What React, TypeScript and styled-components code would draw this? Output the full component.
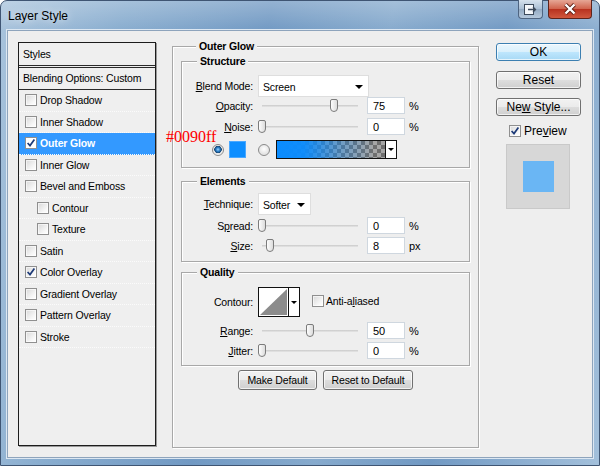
import React from "react";
import styled, { createGlobalStyle } from "styled-components";

const GlobalStyle = createGlobalStyle`
  html, body {
    margin: 0;
    padding: 0;
  }
  body {
    width: 600px;
    height: 466px;
    overflow: hidden;
    font-family: "Liberation Sans", Arial, sans-serif;
    font-size: 10.5px;
    letter-spacing: -0.15px;
    color: #000;
  }
`;

const CLIENT_BG = "#eeeeee";

interface StyleItem {
  label: string;
  checked?: boolean;
  active?: boolean;
  indent?: boolean;
}

const styleItems: StyleItem[] = [
  { label: "Drop Shadow" },
  { label: "Inner Shadow" },
  { label: "Outer Glow", checked: true, active: true },
  { label: "Inner Glow" },
  { label: "Bevel and Emboss" },
  { label: "Contour", indent: true },
  { label: "Texture", indent: true },
  { label: "Satin" },
  { label: "Color Overlay", checked: true },
  { label: "Gradient Overlay" },
  { label: "Pattern Overlay" },
  { label: "Stroke" },
];

const CheckMark = () => (
  <svg width="10" height="10" viewBox="0 0 10 10">
    <path d="M1.6 5 L4 7.6 L8.4 1.6" fill="none" stroke="#1d3a78" strokeWidth="1.7" />
  </svg>
);

const Slider: React.FC<{ pos: number }> = ({ pos }) => (
  <SliderTrack>
    <Thumb style={{ left: pos * 96 }} />
  </SliderTrack>
);

const NumberField: React.FC<{ value: string; unit: string }> = ({ value, unit }) => (
  <>
    <NumInput value={value} readOnly />
    <Unit>{unit}</Unit>
  </>
);

const App: React.FC = () => {
  return (
    <>
      <GlobalStyle />
      <Window>
        <TitleBar>
          <TitleText>Layer Style</TitleText>
          <CaptionButtons>
            <HelpButton>
              <svg width="13" height="11" viewBox="0 0 13 11">
                <rect x="0.5" y="0.5" width="9" height="10" fill="#f4f7fb" stroke="#3c4a5c" />
                <path d="M4 5.5 H11.5 M9 3 L11.5 5.5 L9 8" fill="none" stroke="#3c4a5c" strokeWidth="1.3" />
              </svg>
            </HelpButton>
            <CloseButton>
              <svg width="14" height="12" viewBox="0 0 14 12">
                <path d="M2.5 1.5 L11.5 10.5 M11.5 1.5 L2.5 10.5" stroke="#5a1d14" strokeWidth="4" />
                <path d="M2.5 1.5 L11.5 10.5 M11.5 1.5 L2.5 10.5" stroke="#fff" strokeWidth="2.4" />
              </svg>
            </CloseButton>
          </CaptionButtons>
        </TitleBar>

        <Client>
          <StyleList>
            <ListHeader>Styles</ListHeader>
            <BlendRow>Blending Options: Custom</BlendRow>
            {styleItems.map((item) => (
              <ListItem key={item.label} $indent={item.indent} $active={item.active}>
                <CheckBox $light={item.active}>{item.checked && <CheckMark />}</CheckBox>
                <span>{item.label}</span>
              </ListItem>
            ))}
          </StyleList>

          <MainColumn>
            <MainGroup>
              <GroupTitle>Outer Glow</GroupTitle>

              <GroupBox $mt={8} $pb={9}>
                <GroupTitle>Structure</GroupTitle>
                <FormRow $mt={7} $h={22}>
                  <Label>
                    <u>B</u>lend Mode:
                  </Label>
                  <Select $w={111}>
                    <span>Screen</span>
                    <Arrow />
                  </Select>
                </FormRow>
                <FormRow $mt={0}>
                  <Label>
                    <u>O</u>pacity:
                  </Label>
                  <Slider pos={0.75} />
                  <NumberField value="75" unit="%" />
                </FormRow>
                <FormRow $mt={4}>
                  <Label>
                    <u>N</u>oise:
                  </Label>
                  <Slider pos={0} />
                  <NumberField value="0" unit="%" />
                </FormRow>
                <ColorRow>
                  <Radio $on />
                  <Swatch />
                  <Radio />
                  <GradientPicker>
                    <GradientFill />
                    <PickerArrow>
                      <Arrow $small />
                    </PickerArrow>
                  </GradientPicker>
                </ColorRow>
              </GroupBox>

              <GroupBox $mt={13} $pb={7}>
                <GroupTitle>Elements</GroupTitle>
                <FormRow $mt={5} $h={22}>
                  <Label>
                    <u>T</u>echnique:
                  </Label>
                  <Select $w={53}>
                    <span>Softer</span>
                    <Arrow />
                  </Select>
                </FormRow>
                <FormRow $mt={2}>
                  <Label>
                    S<u>p</u>read:
                  </Label>
                  <Slider pos={0} />
                  <NumberField value="0" unit="%" />
                </FormRow>
                <FormRow $mt={3}>
                  <Label>
                    <u>S</u>ize:
                  </Label>
                  <Slider pos={0.083} />
                  <NumberField value="8" unit="px" />
                </FormRow>
              </GroupBox>

              <GroupBox $mt={10} $pb={6}>
                <GroupTitle>Quality</GroupTitle>
                <FormRow $mt={8} $h={30}>
                  <Label>Contour:</Label>
                  <ContourPicker>
                    <svg width="29" height="28" viewBox="0 0 29 28">
                      <rect width="29" height="28" fill="#fff" />
                      <polygon points="1,27 28,1 28,27" fill="#8c8c8c" />
                    </svg>
                    <PickerArrow>
                      <Arrow $small />
                    </PickerArrow>
                  </ContourPicker>
                  <AntiAlias>
                    <CheckBox />
                    <span>
                      Anti-a<u>l</u>iased
                    </span>
                  </AntiAlias>
                </FormRow>
                <FormRow $mt={5}>
                  <Label>
                    <u>R</u>ange:
                  </Label>
                  <Slider pos={0.5} />
                  <NumberField value="50" unit="%" />
                </FormRow>
                <FormRow $mt={3}>
                  <Label>
                    <u>J</u>itter:
                  </Label>
                  <Slider pos={0} />
                  <NumberField value="0" unit="%" />
                </FormRow>
              </GroupBox>

              <DefaultButtons>
                <Button $w={79}>Make Default</Button>
                <Button $w={90}>Reset to Default</Button>
              </DefaultButtons>
            </MainGroup>
          </MainColumn>

          <SideColumn>
            <Button $w={85} $h={18} $primary $big>
              OK
            </Button>
            <Button $w={85} $h={18} $mt={10} $big>
              Reset
            </Button>
            <Button $w={85} $h={18} $mt={9} $big>
              <span>
                Ne<u>w</u> Style...
              </span>
            </Button>
            <PreviewToggle>
              <CheckBox>
                <CheckMark />
              </CheckBox>
              <span>
                Pre<u>v</u>iew
              </span>
            </PreviewToggle>
            <PreviewBox>
              <PreviewSwatch />
            </PreviewBox>
          </SideColumn>
        </Client>

        <Annotation>#0090ff</Annotation>
      </Window>
    </>
  );
};

const Window = styled.div`
  position: relative;
  box-sizing: border-box;
  width: 600px;
  height: 466px;
  display: flex;
  flex-direction: column;
  border: 1px solid #3f5573;
  border-radius: 7px 7px 0 0;
  background:
    linear-gradient(180deg, rgba(255, 255, 255, 0.25), rgba(255, 255, 255, 0) 30px),
    linear-gradient(100deg, #a8c3dc 0%, #89adcf 18%, #7199c3 40%, #86aacd 58%, #7199c3 75%, #a3c0db 100%);
`;

const TitleBar = styled.div`
  height: 29px;
  display: flex;
  align-items: flex-start;
  padding-left: 7px;
`;

const TitleText = styled.span`
  align-self: center;
  font-family: "Liberation Sans", Arial, sans-serif;
  font-size: 12px;
  letter-spacing: 0;
  color: #000;
  text-shadow: 0 0 8px rgba(255, 255, 255, 0.9);
`;

const CaptionButtons = styled.div`
  margin-left: auto;
  margin-right: 7px;
  margin-top: -1px;
  display: flex;
  gap: 5px;
`;

const HelpButton = styled.div`
  box-sizing: border-box;
  width: 25px;
  height: 19px;
  display: flex;
  align-items: center;
  justify-content: center;
  border: 1px solid #4e6480;
  border-top: none;
  border-radius: 0 0 4px 4px;
  background: linear-gradient(180deg, #d6e2ee, #a9bed4 50%, #93aac3 51%, #b5c8dc);
`;

const CloseButton = styled.div`
  box-sizing: border-box;
  width: 44px;
  height: 19px;
  display: flex;
  align-items: center;
  justify-content: center;
  border: 1px solid #5e231b;
  border-top: none;
  border-radius: 0 0 4px 4px;
  background: linear-gradient(180deg, #e6a796, #d0644e 48%, #b8321f 52%, #d0583e);
`;

const Client = styled.div`
  flex: 1;
  box-sizing: border-box;
  margin: 0 6px 7px 6px;
  border: 1px solid #8ea4bc;
  box-shadow: 0 0 0 1px #dce7f2;
  background: ${CLIENT_BG};
  display: flex;
  align-items: flex-start;
  padding: 11px 0 0 10px;
`;

const StyleList = styled.div`
  box-sizing: border-box;
  flex-shrink: 0;
  width: 138px;
  height: 404px;
  border: 1px solid #1c1c1c;
  box-shadow: 1px 1px 0 #9a9a9a;
  background: #efefef;
`;

const ListHeader = styled.div`
  height: 22px;
  line-height: 22px;
  padding-left: 4px;
  border-bottom: 3px double #2a2a2a;
`;

const BlendRow = styled.div`
  height: 21px;
  line-height: 21px;
  padding-left: 4px;
  border-bottom: 1px solid #2a2a2a;
`;

const ListItem = styled.div<{ $indent?: boolean; $active?: boolean }>`
  box-sizing: border-box;
  height: 21.5px;
  display: flex;
  align-items: center;
  gap: 3px;
  padding-left: ${(p) => (p.$indent ? 18 : 6)}px;
  border-bottom: 1px dotted #fbfbfb;
  background: ${(p) => (p.$active ? "#3399ff" : "transparent")};
  color: ${(p) => (p.$active ? "#fff" : "#000")};
  font-weight: ${(p) => (p.$active ? "bold" : "normal")};
`;

const CheckBox = styled.span<{ $light?: boolean }>`
  box-sizing: border-box;
  flex-shrink: 0;
  width: 12px;
  height: 12px;
  display: inline-flex;
  align-items: center;
  justify-content: center;
  border: 1px solid #8f8f8f;
  background: ${(p) => (p.$light ? "#fff" : "linear-gradient(135deg, #d8d8d8, #f7f7f7 70%, #fff)")};
  box-shadow: inset 0 0 0 1px rgba(255, 255, 255, 0.6);
`;

const MainColumn = styled.div`
  margin-left: 16px;
  margin-top: 4px;
`;

const MainGroup = styled.div`
  box-sizing: border-box;
  width: 307px;
  height: 402px;
  padding: 0 8px;
  border: 1px solid #a8a8a8;
  box-shadow: inset 1px 1px 0 #fff, 1px 1px 0 #fff;
`;

const GroupTitle = styled.div`
  display: table;
  margin: -7px 0 0 15px;
  padding: 0 3px;
  line-height: 13px;
  font-weight: bold;
  background: ${CLIENT_BG};
`;

const GroupBox = styled.div<{ $mt: number; $pb: number }>`
  margin-top: ${(p) => p.$mt}px;
  padding-bottom: ${(p) => p.$pb}px;
  border: 1px solid #a8a8a8;
  box-shadow: inset 1px 1px 0 #fff, 1px 1px 0 #fff;
`;

const FormRow = styled.div<{ $mt: number; $h?: number }>`
  display: flex;
  align-items: center;
  height: ${(p) => p.$h ?? 17}px;
  margin-top: ${(p) => p.$mt}px;
`;

const Label = styled.span`
  flex-shrink: 0;
  width: 71px;
  margin-right: 5px;
  text-align: right;
  white-space: nowrap;
`;

const Select = styled.div<{ $w: number }>`
  box-sizing: border-box;
  width: ${(p) => p.$w}px;
  height: 22px;
  display: flex;
  align-items: center;
  justify-content: space-between;
  padding: 2px 5px 0 4px;
  background: #fff;
  border: 1px solid #dedede;
`;

const Arrow = styled.span<{ $small?: boolean }>`
  width: 0;
  height: 0;
  border-left: ${(p) => (p.$small ? 3 : 4)}px solid transparent;
  border-right: ${(p) => (p.$small ? 3 : 4)}px solid transparent;
  border-top: ${(p) => (p.$small ? 3 : 4)}px solid #000;
`;

const SliderTrack = styled.div`
  position: relative;
  flex-shrink: 0;
  width: 104px;
  height: 17px;
  background: linear-gradient(#c9c9c9, #e6e6e6) no-repeat 4px 8px / 96px 2px;
`;

const Thumb = styled.span`
  position: absolute;
  top: 2px;
  box-sizing: border-box;
  width: 8px;
  height: 13px;
  border: 1px solid #7b7b7b;
  border-radius: 2px 2px 4px 4px;
  background: linear-gradient(90deg, #fdfdfd, #dcdcdc);
`;

const NumInput = styled.input`
  box-sizing: border-box;
  width: 38px;
  height: 17px;
  margin: 0 0 0 5px;
  padding: 1px 0 0 5px;
  border: 1px solid #cfd7df;
  background: #fff;
  font-family: "Liberation Sans", Arial, sans-serif;
  font-size: 11px;
  color: #000;
  outline: none;
`;

const Unit = styled.span`
  margin-left: 4px;
  font-size: 11px;
`;

const ColorRow = styled.div`
  display: flex;
  align-items: center;
  height: 17px;
  margin-top: 6px;
  padding-left: 30px;
`;

const Radio = styled.span<{ $on?: boolean }>`
  box-sizing: border-box;
  flex-shrink: 0;
  width: 12px;
  height: 12px;
  border-radius: 50%;
  border: 1px solid #8a8a8a;
  background: ${(p) =>
    p.$on
      ? "radial-gradient(circle at 50% 45%, #9fd6ff 0, #2a7cc4 2px, #17446f 3.5px, #e6e6e6 4px, #fafafa 6px)"
      : "radial-gradient(circle at 50% 40%, #fff 0, #e4e4e4 5px)"};
`;

const Swatch = styled.span`
  width: 17px;
  height: 17px;
  margin: 0 12px 0 5px;
  background: #0d8eff;
  box-shadow: inset 0 0 0 1px #4aa8ff;
`;

const GradientPicker = styled.div`
  display: flex;
  height: 17px;
  margin-left: 6px;
  border: 1px solid #111;
`;

const GradientFill = styled.span`
  width: 108px;
  background:
    linear-gradient(90deg, #0a8cff 0%, rgba(10, 140, 255, 0.95) 25%, rgba(10, 140, 255, 0.35) 60%, rgba(10, 140, 255, 0) 90%),
    repeating-conic-gradient(#6f6f6f 0 25%, #a6a6a6 0 50%) 0 0 / 8px 8px;
`;

const PickerArrow = styled.span`
  width: 10px;
  display: flex;
  align-items: center;
  justify-content: center;
  background: #fff;
  border-left: 1px solid #111;
`;

const ContourPicker = styled.div`
  display: flex;
  height: 30px;
  box-sizing: border-box;
  border: 1px solid #111;
  background: #fff;
`;

const AntiAlias = styled.label`
  display: flex;
  align-items: center;
  gap: 2px;
  margin-left: 12px;
  margin-top: -2px;
`;

const DefaultButtons = styled.div`
  display: flex;
  justify-content: center;
  gap: 6px;
  margin-top: 4px;
`;

const Button = styled.div<{ $w: number; $h?: number; $mt?: number; $primary?: boolean; $big?: boolean }>`
  box-sizing: border-box;
  width: ${(p) => p.$w}px;
  height: ${(p) => p.$h ?? 20}px;
  margin-top: ${(p) => p.$mt ?? 0}px;
  display: flex;
  align-items: center;
  justify-content: center;
  font-size: ${(p) => (p.$big ? 12 : 10.5)}px;
  letter-spacing: ${(p) => (p.$big ? 0 : -0.15)}px;
  border: 1px solid ${(p) => (p.$primary ? "#3c7fb1" : "#707070")};
  border-radius: 3px;
  background: ${(p) =>
    p.$primary
      ? "linear-gradient(180deg, #eaf6fd, #d9f0fc 50%, #bee6fd 51%, #a7d9f5)"
      : "linear-gradient(180deg, #f2f2f2, #ebebeb 50%, #dddddd 51%, #cfcfcf)"};
  box-shadow: inset 0 0 0 1px rgba(255, 255, 255, 0.7);
  white-space: nowrap;
`;

const SideColumn = styled.div`
  display: flex;
  flex-direction: column;
  margin-left: 17px;
  margin-top: 1px;
`;

const PreviewToggle = styled.label`
  display: flex;
  align-items: center;
  gap: 3px;
  margin: 8px 0 0 13px;
  height: 13px;
  font-size: 12px;
  letter-spacing: 0;
`;

const PreviewBox = styled.div`
  box-sizing: border-box;
  width: 64px;
  height: 65px;
  margin: 7px 0 0 10px;
  display: flex;
  align-items: center;
  justify-content: center;
  border: 1px solid #c9c9c9;
  background: #d7d7d7;
`;

const PreviewSwatch = styled.span`
  width: 31px;
  height: 31px;
  background: #6ab6f4;
`;

const Annotation = styled.div`
  position: absolute;
  left: 165px;
  top: 128px;
  font-family: "Liberation Serif", "Times New Roman", serif;
  font-size: 16px;
  line-height: 16px;
  letter-spacing: 0;
  color: #ff0000;
`;

export default App;
